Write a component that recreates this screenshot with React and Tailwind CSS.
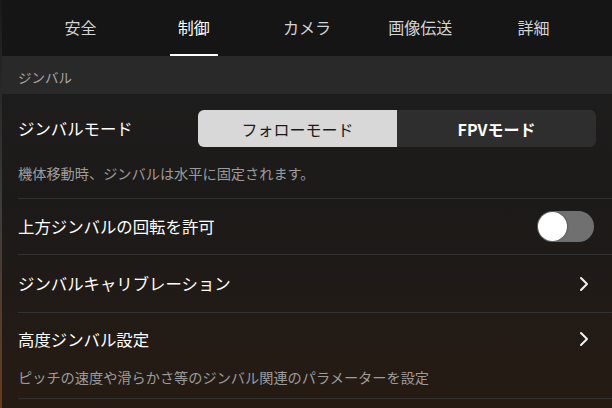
import React from "react";

const font = { fontFamily: '"Noto Sans CJK JP", "Noto Sans", sans-serif' };

function Chevron() {
  return (
    <svg width="10" height="16" viewBox="0 0 10 16" fill="none">
      <path d="M2 2 L8 8 L2 14" stroke="#f2f2f2" strokeWidth="2" strokeLinecap="round" strokeLinejoin="round" />
    </svg>
  );
}

export default function App() {
  const tabs = ["安全", "制御", "カメラ", "画像伝送", "詳細"];
  return (
    <div className="w-[612px] h-[408px] overflow-hidden flex bg-[#1d1d1d]" style={font}>
      <div className="w-[2px] h-full bg-linear-to-b from-[#1a1a1a] via-[#3c3c3c] to-[#6a3a1a]" />
      <div className="flex-1 flex flex-col bg-linear-to-b from-[#1f1f1f] via-[#1c1a19] to-[#261b13]">
        {/* header */}
        <div className="h-[56px] bg-[#151515] grid grid-cols-5 px-[22px] shrink-0">
          {tabs.map((t, i) => (
            <div key={t} className="relative flex items-center justify-center pb-[2px]">
              <span className={`text-[16px] leading-none ${i === 1 ? "text-white" : "text-[#d4d4d4]"}`}>{t}</span>
              {i === 1 && <div className="absolute bottom-0 left-1/2 -translate-x-1/2 w-[48px] h-[2px] bg-white" />}
            </div>
          ))}
        </div>
        {/* section header */}
        <div className="h-[38px] bg-[#292929] flex items-center px-[16px] pt-[5px] shrink-0">
          <span className="text-[13.5px] text-[#a6a6a6] leading-none">ジンバル</span>
        </div>
        {/* gimbal mode */}
        <div className="ml-[16px] pr-[16px] border-b border-[#313131] pt-[16px] pb-[15px]">
          <div className="flex items-center justify-between">
            <span className="text-[16.4px] text-white leading-none">ジンバルモード</span>
            <div className="w-[398px] h-[37px] flex rounded-[6px] overflow-hidden">
              <div className="flex-1 bg-[#d8d8d8] flex items-center justify-center text-[16px] text-[#1a1a1a]">フォローモード</div>
              <div className="flex-1 bg-[#2e2e2e] flex items-center justify-center text-[16px] text-white font-bold">FPVモード</div>
            </div>
          </div>
          <div className="mt-[16px] text-[14.2px] leading-[20px] text-[#9c9c9c]">機体移動時、ジンバルは水平に固定されます。</div>
        </div>
        {/* toggle */}
        <div className="ml-[16px] pr-[18px] border-b border-[#313131] h-[56px] flex items-center justify-between">
          <span className="text-[16.4px] text-white">上方ジンバルの回転を許可</span>
          <div className="w-[57px] h-[31px] rounded-full bg-[#707070] flex items-center px-[1px]">
            <div className="w-[29px] h-[29px] rounded-full bg-white shadow-[0_0_2px_rgba(0,0,0,0.5)]" />
          </div>
        </div>
        {/* calibration */}
        <div className="ml-[16px] pr-[23px] border-b border-[#313131] h-[58px] flex items-center justify-between">
          <span className="text-[16.4px] text-white">ジンバルキャリブレーション</span>
          <Chevron />
        </div>
        {/* advanced */}
        <div className="ml-[16px] pr-[23px] border-b border-[#313131] pt-[14px] pb-[11px]">
          <div className="flex items-center justify-between h-[24px]">
            <span className="text-[16.4px] text-white">高度ジンバル設定</span>
            <Chevron />
          </div>
          <div className="mt-[16px] text-[14.2px] leading-[20px] text-[#9c9c9c]">ピッチの速度や滑らかさ等のジンバル関連のパラメーターを設定</div>
        </div>
      </div>
    </div>
  );
}
